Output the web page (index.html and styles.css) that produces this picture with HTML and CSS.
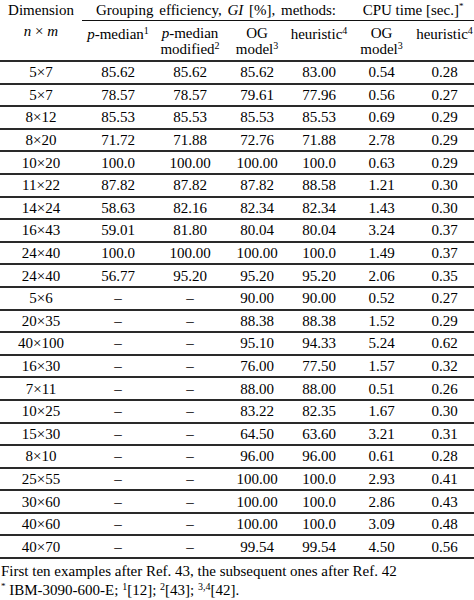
FILE: index.html
```html
<!DOCTYPE html>
<html>
<head>
<meta charset="utf-8">
<link rel="stylesheet" href="styles.css">
</head>
<body>
<div class="page">
<table class="data">
<colgroup>
<col class="c1"><col class="c2"><col class="c3"><col class="c4"><col class="c5"><col class="c6"><col class="c7">
</colgroup>
<thead>
<tr class="h1">
<th class="dim">Dimension</th>
<th class="grp wide" colspan="4">Grouping efficiency, <i>GI</i> [%], methods:</th>
<th class="grp" colspan="2">CPU time [sec.]<sup class="ast">*</sup></th>
</tr>
<tr class="h2">
<th class="nm"><i>n</i> × <i>m</i></th>
<th class="one"><i>p</i>-median<sup>1</sup></th>
<th><i>p</i>-median<br>modified<sup>2</sup></th>
<th>OG<br>model<sup>3</sup></th>
<th class="one">heuristic<sup>4</sup></th>
<th>OG<br>model<sup>3</sup></th>
<th class="one">heuristic<sup>4</sup></th>
</tr>
</thead>
<tbody>
<tr><td>5×7</td><td>85.62</td><td>85.62</td><td>85.62</td><td>83.00</td><td>0.54</td><td>0.28</td></tr>
<tr><td>5×7</td><td>78.57</td><td>78.57</td><td>79.61</td><td>77.96</td><td>0.56</td><td>0.27</td></tr>
<tr><td>8×12</td><td>85.53</td><td>85.53</td><td>85.53</td><td>85.53</td><td>0.69</td><td>0.29</td></tr>
<tr><td>8×20</td><td>71.72</td><td>71.88</td><td>72.76</td><td>71.88</td><td>2.78</td><td>0.29</td></tr>
<tr><td>10×20</td><td>100.0</td><td>100.00</td><td>100.00</td><td>100.0</td><td>0.63</td><td>0.29</td></tr>
<tr><td>11×22</td><td>87.82</td><td>87.82</td><td>87.82</td><td>88.58</td><td>1.21</td><td>0.30</td></tr>
<tr><td>14×24</td><td>58.63</td><td>82.16</td><td>82.34</td><td>82.34</td><td>1.43</td><td>0.30</td></tr>
<tr><td>16×43</td><td>59.01</td><td>81.80</td><td>80.04</td><td>80.04</td><td>3.24</td><td>0.37</td></tr>
<tr><td>24×40</td><td>100.0</td><td>100.00</td><td>100.00</td><td>100.0</td><td>1.49</td><td>0.37</td></tr>
<tr><td>24×40</td><td>56.77</td><td>95.20</td><td>95.20</td><td>95.20</td><td>2.06</td><td>0.35</td></tr>
<tr><td>5×6</td><td>–</td><td>–</td><td>90.00</td><td>90.00</td><td>0.52</td><td>0.27</td></tr>
<tr><td>20×35</td><td>–</td><td>–</td><td>88.38</td><td>88.38</td><td>1.52</td><td>0.29</td></tr>
<tr><td>40×100</td><td>–</td><td>–</td><td>95.10</td><td>94.33</td><td>5.24</td><td>0.62</td></tr>
<tr><td>16×30</td><td>–</td><td>–</td><td>76.00</td><td>77.50</td><td>1.57</td><td>0.32</td></tr>
<tr><td>7×11</td><td>–</td><td>–</td><td>88.00</td><td>88.00</td><td>0.51</td><td>0.26</td></tr>
<tr><td>10×25</td><td>–</td><td>–</td><td>83.22</td><td>82.35</td><td>1.67</td><td>0.30</td></tr>
<tr><td>15×30</td><td>–</td><td>–</td><td>64.50</td><td>63.60</td><td>3.21</td><td>0.31</td></tr>
<tr><td>8×10</td><td>–</td><td>–</td><td>96.00</td><td>96.00</td><td>0.61</td><td>0.28</td></tr>
<tr><td>25×55</td><td>–</td><td>–</td><td>100.00</td><td>100.0</td><td>2.93</td><td>0.41</td></tr>
<tr><td>30×60</td><td>–</td><td>–</td><td>100.00</td><td>100.0</td><td>2.86</td><td>0.43</td></tr>
<tr><td>40×60</td><td>–</td><td>–</td><td>100.00</td><td>100.0</td><td>3.09</td><td>0.48</td></tr>
<tr><td>40×70</td><td>–</td><td>–</td><td>99.54</td><td>99.54</td><td>4.50</td><td>0.56</td></tr>
</tbody>
</table>
<div class="notes">
<p class="note">First ten examples after Ref. 43, the subsequent ones after Ref. 42</p>
<p class="note"><sup class="ast">*</sup> IBM-3090-600-E; <sup>1</sup>[12]; <sup>2</sup>[43]; <sup>3,4</sup>[42].</p>
</div>
</div>
</body>
</html>
```

FILE: styles.css
```css
html, body {
  margin: 0;
  padding: 0;
  background: #fff;
  overflow: hidden;
}
.page {
  width: 474px;
  height: 600px;
  overflow: hidden;
  font-family: "Liberation Serif", "Times New Roman", serif;
  font-size: 15px;
  color: #000;
}
.data {
  width: 476px;
  table-layout: fixed;
  border-collapse: collapse;
  border-spacing: 0;
}
.c1 { width: 82px; }
.c2 { width: 72px; }
.c3 { width: 72px; }
.c4 { width: 62px; }
.c5 { width: 62px; }
.c6 { width: 63px; }
.c7 { width: 63px; }
th, td {
  padding: 0;
  text-align: center;
  font-weight: normal;
  white-space: nowrap;
}
.h1 th {
  height: 20px;
  line-height: 20px;
}
.h1 .grp {
  border-bottom: 1px solid #111;
}
.h1 .wide {
  word-spacing: 2px;
}
.h2 th {
  height: 34px;
  line-height: 16px;
  vertical-align: middle;
  padding-bottom: 0;
}
.h2 th.one {
  vertical-align: top;
  padding-top: 5px;
}
.h2 th.nm {
  vertical-align: top;
  padding-top: 2px;
}
sup {
  font-size: 10px;
  line-height: 0;
  vertical-align: 5px;
}
sup.ast {
  font-size: 9px;
  vertical-align: 6px;
}
tbody td {
  border-top: 2px solid #2a2a2a;
  height: 20.6px;
  line-height: 20px;
}
tbody tr:last-child td {
  border-bottom: 2px solid #2a2a2a;
}
.notes {
  padding-top: 3px;
}
.note {
  margin: 0;
  padding-left: 1px;
  line-height: 19px;
  font-size: 15px;
}
```
